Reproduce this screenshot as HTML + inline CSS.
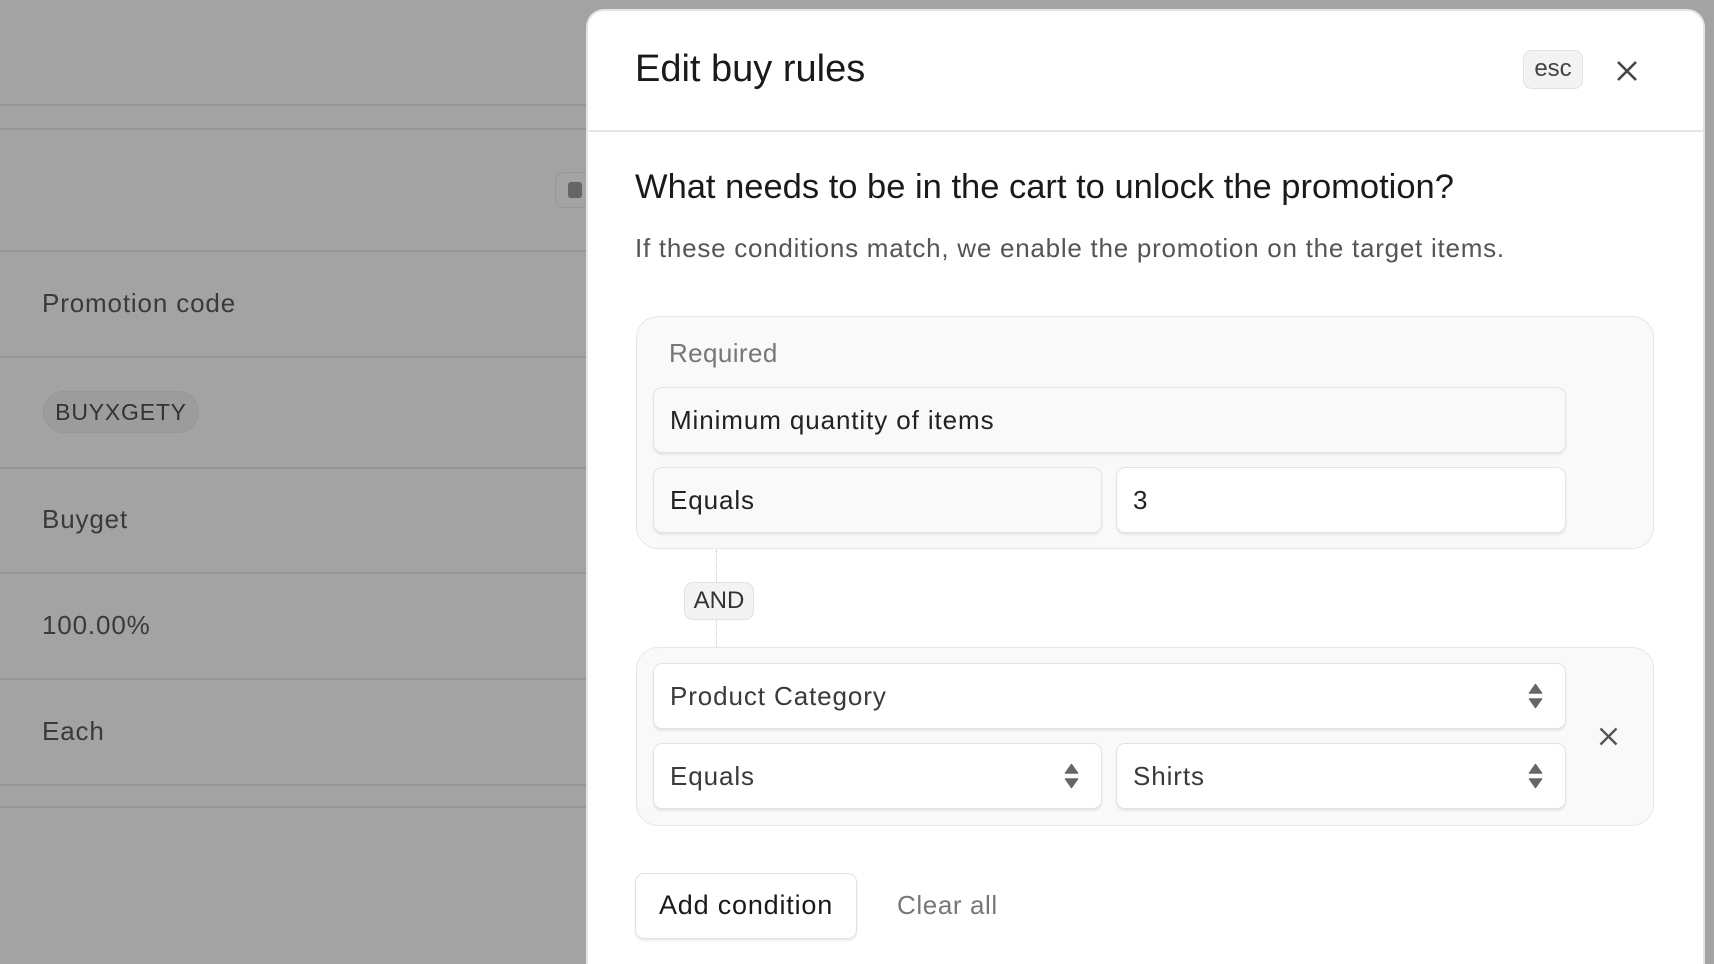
<!DOCTYPE html>
<html><head><meta charset="utf-8"><style>
*{box-sizing:border-box;margin:0;padding:0}
html{width:1714px;height:964px;overflow:hidden}
body{width:1714px;height:964px;overflow:hidden;background:#a3a3a3;font-family:"Liberation Sans",sans-serif;position:relative;color:#1f1f1f}
.abs{position:absolute}
.ln{position:absolute;left:0;width:586px;height:2px;background:#969696}
.lt{position:absolute;left:42px;font-size:26px;letter-spacing:.85px;color:#3a3a3a}
.panel{position:absolute;left:586px;top:9px;width:1119px;height:955px;background:#fff;border-radius:18px 18px 0 0;border:2px solid #e4e4e4;border-bottom:none}
.grp{position:absolute;left:636px;width:1018px;background:#f9f9f9;border:1.5px solid #e6e6e6;border-radius:22px}
.inp{position:absolute;background:#fff;border:1.5px solid #e3e3e3;border-radius:9px;box-shadow:0 2px 2px rgba(0,0,0,.08);font-size:26px;letter-spacing:.9px;color:#3a3a3a;padding-left:16px;display:flex;align-items:center}
.inp.g{background:#f9f9f9}
.arr{position:absolute;right:22px;top:50%;margin-top:-13px}
</style></head><body>
<div class="ln" style="top:104px"></div>
<div class="ln" style="top:128px"></div>
<div class="ln" style="top:250px"></div>
<div class="ln" style="top:356px"></div>
<div class="ln" style="top:467px"></div>
<div class="ln" style="top:572px"></div>
<div class="ln" style="top:678px"></div>
<div class="ln" style="top:784px"></div>
<div class="ln" style="top:806px"></div>
<div class="abs" style="left:555px;top:172px;width:40px;height:36px;border:1.5px solid #979797;border-radius:9px"></div>
<div class="abs" style="left:568px;top:182px;width:14px;height:16px;background:#666;border-radius:3px"></div>
<div class="lt" style="top:288px">Promotion code</div>
<div class="abs" style="left:43px;top:391px;width:156px;height:42px;border:1.5px solid #979797;border-radius:21px;background:#9c9c9c;font-size:23px;color:#333;text-align:center;line-height:40px;letter-spacing:.8px">BUYXGETY</div>
<div class="lt" style="top:504px">Buyget</div>
<div class="lt" style="top:610px">100.00%</div>
<div class="lt" style="top:716px">Each</div>

<div class="panel"></div>
<div class="abs" style="left:635px;top:48px;font-size:38px;color:#1a1a1a">Edit buy rules</div>
<div class="abs" style="left:1523px;top:50px;width:60px;height:39px;background:#f3f3f3;border:1.5px solid #e2e2e2;border-radius:9px;font-size:24px;color:#444;text-align:center;line-height:36px">esc</div>
<svg class="abs" style="left:1616px;top:60px" width="22" height="22" viewBox="0 0 22 22"><path d="M2 2L20 20M20 2L2 20" stroke="#444" stroke-width="2.6"/></svg>
<div class="abs" style="left:588px;top:130px;width:1115px;height:2px;background:#e6e6e6"></div>
<div class="abs" style="left:635px;top:168px;font-size:34.5px;color:#1a1a1a;white-space:nowrap">What needs to be in the cart to unlock the promotion?</div>
<div class="abs" style="left:635px;top:233px;font-size:26px;color:#555;white-space:nowrap;letter-spacing:.75px">If these conditions match, we enable the promotion on the target items.</div>

<div class="grp" style="top:316px;height:233px"></div>
<div class="abs" style="left:669px;top:338px;font-size:26px;letter-spacing:.4px;color:#777">Required</div>
<div class="inp g" style="left:653px;top:387px;width:913px;height:66px;color:#222">Minimum quantity of items</div>
<div class="inp g" style="left:653px;top:467px;width:449px;height:66px;color:#222">Equals</div>
<div class="inp" style="left:1116px;top:467px;width:450px;height:66px;color:#222">3</div>

<div class="abs" style="left:716px;top:550px;height:32px;border-left:1.5px dotted #c8c8c8"></div>
<div class="abs" style="left:684px;top:582px;width:70px;height:38px;background:#f3f3f3;border:1.5px solid #e2e2e2;border-radius:9px;font-size:24px;color:#333;text-align:center;line-height:35px">AND</div>
<div class="abs" style="left:716px;top:620px;height:27px;border-left:1.5px dotted #c8c8c8"></div>

<div class="grp" style="top:647px;height:179px"></div>
<div class="inp" style="left:653px;top:663px;width:913px;height:66px">Product Category<svg class="arr" width="15" height="26" viewBox="0 0 15 26"><path d="M7.5 1.5L13.5 10H1.5Z M7.5 24.5L13.5 16H1.5Z" fill="#666" stroke="#666" stroke-linejoin="round" stroke-width="1.5"/></svg></div>
<div class="inp" style="left:653px;top:743px;width:449px;height:66px">Equals<svg class="arr" width="15" height="26" viewBox="0 0 15 26"><path d="M7.5 1.5L13.5 10H1.5Z M7.5 24.5L13.5 16H1.5Z" fill="#666" stroke="#666" stroke-linejoin="round" stroke-width="1.5"/></svg></div>
<div class="inp" style="left:1116px;top:743px;width:450px;height:66px">Shirts<svg class="arr" width="15" height="26" viewBox="0 0 15 26"><path d="M7.5 1.5L13.5 10H1.5Z M7.5 24.5L13.5 16H1.5Z" fill="#666" stroke="#666" stroke-linejoin="round" stroke-width="1.5"/></svg></div>
<svg class="abs" style="left:1599px;top:727px" width="19" height="19" viewBox="0 0 19 19"><path d="M1.5 1.5L17.5 17.5M17.5 1.5L1.5 17.5" stroke="#555" stroke-width="2.4"/></svg>

<div class="abs" style="left:635px;top:873px;width:222px;height:66px;background:#fff;border:1.5px solid #e2e2e2;border-radius:9px;box-shadow:0 2px 2px rgba(0,0,0,.08);font-size:27px;letter-spacing:.8px;color:#1a1a1a;text-align:center;line-height:63px">Add condition</div>
<div class="abs" style="left:897px;top:890px;font-size:26px;letter-spacing:.6px;color:#777">Clear all</div>
</body></html>
